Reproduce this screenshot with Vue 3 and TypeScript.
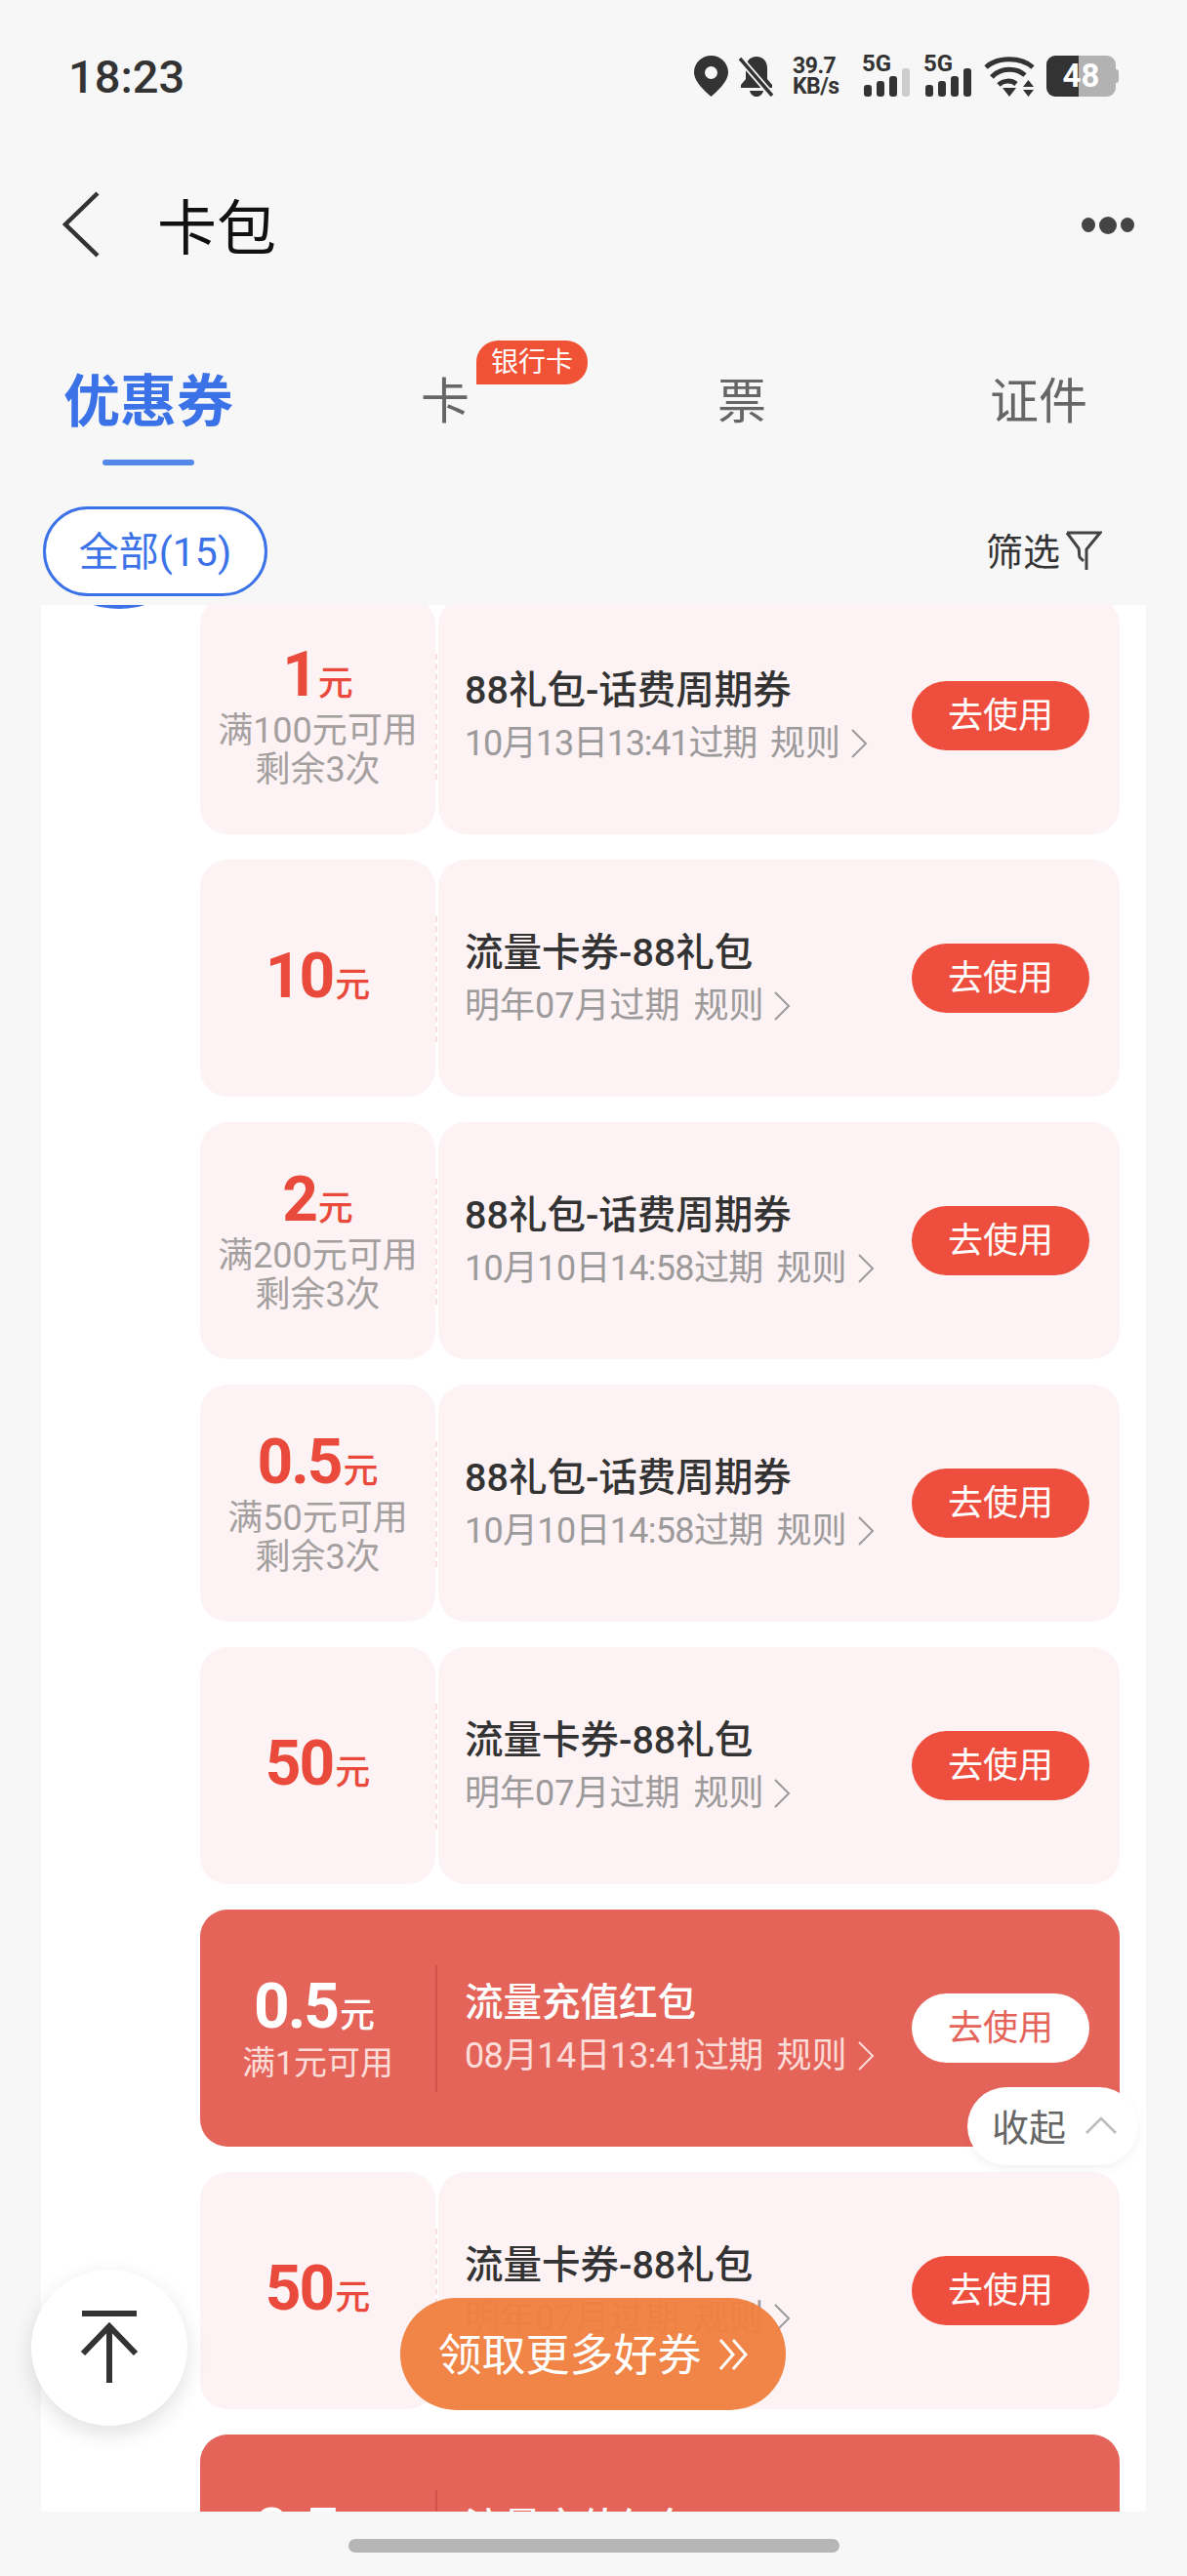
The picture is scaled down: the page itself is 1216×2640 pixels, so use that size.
<template>
  <div class="page">
    <div class="status">
      <span class="time">18:23</span>
      <div class="status-icons">
        <svg class="pin" width="35" height="42" viewBox="0 0 35 42">
          <path fill-rule="evenodd" d="M17.5 0C7.8 0 0 7.6 0 17c0 10 12 20 17.5 25C23 37 35 27 35 17 35 7.6 27.2 0 17.5 0zm0 11a6.5 6.5 0 1 1 0 13 6.5 6.5 0 0 1 0-13z" fill="#333" />
        </svg>
        <svg class="bell" width="36" height="42" viewBox="0 0 36 42">
          <path d="M18 1C11 1 7 6 7 13v11l-5 6v3h32v-3l-5-6V13C29 6 25 1 18 1z" fill="#333" />
          <path d="M11 36h14c-1 4-4 6-7 6s-6-2-7-6z" fill="#333" />
          <path d="M1 3l33 38" stroke="#f7f7f7" stroke-width="7" />
          <path d="M1 3l33 38" stroke="#333" stroke-width="3.5" />
        </svg>
        <div class="speed">
          <span>39.7</span>
          <span>KB/s</span>
        </div>
        <div class="sim">
          <span class="sim-label">5G</span>
          <div class="bars">
            <i v-for="(h, n) in barHeights" :key="n" :class="{ off: n === 3 }" :style="{ height: h + 'px' }"></i>
          </div>
        </div>
        <div class="sim sim-two">
          <span class="sim-label">5G</span>
          <div class="bars">
            <i v-for="(h, n) in barHeights" :key="n" :style="{ height: h + 'px' }"></i>
          </div>
        </div>
        <svg class="wifi" width="52" height="42" viewBox="0 0 52 42">
          <g fill="none" stroke="#333" stroke-width="5">
            <path d="M2 12C14 1 38 1 50 12" />
            <path d="M8 22C17 12 33 12 42 20" />
            <path d="M15 30C20 25 28 25 33 29" />
          </g>
          <path d="M19 33h14l-7 9zM40 32l5.500-7 5.500 7zM40 35h11l-5.500 7z" fill="#333" />
        </svg>
        <div class="battery">48</div>
      </div>
    </div>

    <div class="nav">
      <svg class="back" width="40" height="68" viewBox="0 0 40 68">
        <path d="M37 2L4 34l33 32" fill="none" stroke="#333" stroke-width="4.500" />
      </svg>
      <span class="nav-title">卡包</span>
      <div class="more"><i></i><i class="big"></i><i></i></div>
    </div>

    <div class="tabs">
      <div v-for="(t, n) in tabs" :key="t" class="tab" :class="{ active: n === 0 }">
        <span class="tab-label">{{ t }}</span>
        <span v-if="n === 0" class="tab-line"></span>
        <span v-if="n === 1" class="tab-badge">银行卡</span>
      </div>
    </div>

    <div class="filter-row">
      <div class="pill">全部(15)</div>
      <div class="filter">
        <span class="filter-text">筛选</span>
        <svg width="38" height="44" viewBox="0 0 38 44">
          <path d="M2 3h34L22 20v21M2 3l12 16c1 3 0 6 1 9l4 4" fill="none" stroke="#444" stroke-width="3" />
        </svg>
      </div>
    </div>

    <div class="panel">
      <span class="dot"></span>
      <div class="list">
        <div v-for="(c, n) in coupons" :key="n" class="coupon" :class="{ red: c.red }">
          <div class="left">
            <div class="amount">{{ c.amount }}<small>元</small></div>
            <div v-for="line in c.notes" :key="line" class="note">{{ line }}</div>
          </div>
          <div class="right">
            <div class="info">
              <div class="name">{{ c.name }}</div>
              <div class="expire">
                <span :class="{ tight: c.expire.length > 8, squeeze: c.squeeze }">{{ c.expire }}</span>
                <span>规则</span>
                <svg width="18" height="32" viewBox="0 0 18 32">
                  <path d="M2 2l14 14L2 30" fill="none" stroke="currentColor" stroke-width="2" />
                </svg>
              </div>
            </div>
            <div class="use">去使用</div>
          </div>
        </div>
      </div>
    </div>

    <div class="home"><span class="home-bar"></span></div>

    <div class="collapse">
      <span>收起</span>
      <svg width="32" height="18" viewBox="0 0 32 18">
        <path d="M1 17L16 2l15 15" fill="none" stroke="#bbb" stroke-width="2.500" />
      </svg>
    </div>
    <div class="to-top">
      <svg width="60" height="76" viewBox="0 0 60 76">
        <path d="M2 3h56" stroke="#333" stroke-width="6" />
        <path d="M30 16v58M3 44l27-28 27 28" fill="none" stroke="#333" stroke-width="6" />
      </svg>
    </div>
    <div class="more-btn">
      <span class="more-text">领取更多好券</span>
      <svg width="32" height="36" viewBox="0 0 32 36">
        <path d="M3 3l13 15L3 33M16 3l13 15-13 15" fill="none" stroke="#fff" stroke-width="3" />
      </svg>
    </div>
  </div>
</template>

<script setup lang="ts">
interface Coupon {
  amount: string
  notes: string[]
  name: string
  expire: string
  red?: boolean
  squeeze?: boolean
}

const barHeights = [12, 16, 21, 29]
const tabs = ['优惠券', '卡', '票', '证件']

const gift = '88礼包-话费周期券'
const flow = '流量卡券-88礼包'
const packet = '流量充值红包'

const coupons: Coupon[] = [
  { amount: '1', notes: ['满100元可用', '剩余3次'], name: gift, expire: '10月13日13:41过期', squeeze: true },
  { amount: '10', notes: [], name: flow, expire: '明年07月过期' },
  { amount: '2', notes: ['满200元可用', '剩余3次'], name: gift, expire: '10月10日14:58过期' },
  { amount: '0.5', notes: ['满50元可用', '剩余3次'], name: gift, expire: '10月10日14:58过期' },
  { amount: '50', notes: [], name: flow, expire: '明年07月过期' },
  { amount: '0.5', notes: ['满1元可用'], name: packet, expire: '08月14日13:41过期', red: true },
  { amount: '50', notes: [], name: flow, expire: '明年07月过期' },
  { amount: '0.5', notes: ['满1元可用'], name: packet, expire: '08月14日13:41过期', red: true }
]
</script>

<style scoped>
.page {
  position: relative;
  width: 1216px;
  height: 2640px;
  overflow: hidden;
  display: flex;
  flex-direction: column;
  background: #f7f7f7;
  font-family: Roboto, "Noto Sans CJK SC", sans-serif;
  color: #333;
}

/* status bar */
.status {
  height: 110px;
  flex-shrink: 0;
  display: flex;
  justify-content: space-between;
  padding: 56px 70px 0;
  box-sizing: border-box;
}
.time {
  font-size: 47px;
  line-height: 46px;
  font-weight: 500;
  color: #333;
}
.status-icons {
  display: flex;
  align-items: flex-start;
  height: 42px;
  margin-top: 1px;
}
.bell {
  margin-left: 11px;
}
.speed {
  margin-left: 19px;
  width: 50px;
  display: flex;
  flex-direction: column;
  font-size: 23px;
  line-height: 21px;
  font-weight: 700;
  letter-spacing: -0.500px;
  white-space: nowrap;
}
.sim {
  margin-left: 21px;
  width: 50px;
  height: 42px;
  position: relative;
}
.sim-two {
  margin-left: 13px;
}
.sim-label {
  position: absolute;
  left: 0;
  top: -4px;
  font-size: 24px;
  line-height: 24px;
  font-weight: 700;
}
.bars {
  position: absolute;
  left: 2px;
  bottom: 0;
  display: flex;
  align-items: flex-end;
  gap: 5px;
}
.bars i {
  width: 8px;
  border-radius: 3px;
  background: #333;
}
.bars i.off {
  background: #ccc;
}
.wifi {
  margin-left: 12px;
}
.battery {
  position: relative;
  margin-left: 12px;
  width: 71px;
  height: 42px;
  margin-right: 3px;
  border-radius: 9px;
  background: linear-gradient(90deg, #333 33px, #b2b2b2 33px);
  color: #fff;
  font-size: 33px;
  font-weight: 700;
  line-height: 42px;
  text-align: center;
}
.battery::after {
  content: "";
  position: absolute;
  right: -3px;
  top: 14px;
  width: 3px;
  height: 14px;
  border-radius: 0 3px 3px 0;
  background: #b2b2b2;
}

/* nav */
.nav {
  height: 206px;
  flex-shrink: 0;
  box-sizing: border-box;
  display: flex;
  align-items: center;
  padding: 34px 51px 0 63px;
  border-bottom: 1px solid #f3f3f3;
}
.nav-title {
  margin: 10px 0 0 58px;
  font-size: 61px;
  line-height: 70px;
  color: #111;
}
.more {
  margin: 2px 3px 0 auto;
  display: flex;
  align-items: center;
  gap: 3px;
}
.more i {
  width: 14px;
  height: 15px;
  border-radius: 50%;
  background: #444;
}
.more i.big {
  width: 18px;
  height: 18px;
  margin: 0 1px;
}

/* tabs */
.tabs {
  height: 203px;
  flex-shrink: 0;
  display: grid;
  grid-template-columns: repeat(4, 304px);
}
.tab {
  position: relative;
  display: flex;
  flex-direction: column;
  align-items: center;
  padding-top: 66px;
}
.tab-label {
  font-size: 50px;
  line-height: 60px;
  color: #666;
}
.tab.active .tab-label {
  font-size: 58px;
  font-weight: 700;
  color: #3b72e8;
}
.tab-line {
  margin-top: 29px;
  width: 94px;
  height: 6px;
  border-radius: 3px;
  background: #5488e8;
}
.tab-badge {
  position: absolute;
  left: 184px;
  top: 33px;
  width: 114px;
  height: 45px;
  border-radius: 22px 22px 22px 0;
  background: #ef5235;
  color: #fff;
  font-size: 28px;
  line-height: 45px;
  text-align: center;
}

/* filter row */
.filter-row {
  height: 101px;
  flex-shrink: 0;
  display: flex;
  justify-content: space-between;
  align-items: flex-start;
  padding: 0 87px 0 44px;
}
.pill {
  width: 230px;
  height: 92px;
  box-sizing: border-box;
  border: 3px solid #3b72e8;
  border-radius: 46px;
  background: #fff;
  color: #3b72e8;
  font-size: 41px;
  line-height: 88px;
  text-align: center;
  position: relative;
  z-index: 1;
}
.filter {
  display: flex;
  align-items: center;
  gap: 5px;
  height: 92px;
  font-size: 38px;
  color: #333;
}
.filter-text {
  margin-bottom: 6px;
}

/* coupon list */
.panel {
  position: relative;
  height: 1954px;
  flex-shrink: 0;
  margin: 0 42px;
  box-sizing: border-box;
  padding: 0 27px 0 163px;
  background: #fff;
  overflow: hidden;
}
.dot {
  position: absolute;
  left: -10px;
  top: -176px;
  width: 180px;
  height: 180px;
  border-radius: 50%;
  background: #3b72e8;
}
.list {
  margin-top: -8px;
  display: flex;
  flex-direction: column;
  gap: 26px;
}
.coupon {
  height: 243px;
  flex-shrink: 0;
  display: flex;
  justify-content: space-between;
  position: relative;
}
.left {
  width: 241px;
  display: flex;
  flex-direction: column;
  align-items: center;
  justify-content: center;
  background: #fdf2f4;
  border-radius: 28px;
}
.right {
  width: 698px;
  box-sizing: border-box;
  padding: 0 31px 0 27px;
  display: flex;
  align-items: center;
  justify-content: space-between;
  background: #fdf2f4;
  border-radius: 28px;
}
.coupon::after {
  content: "";
  position: absolute;
  left: 241px;
  top: 58px;
  bottom: 56px;
  width: 0;
  border-left: 2px dashed #f6dfe3;
}
.amount {
  padding-top: 5px;
  font-size: 64px;
  line-height: 56px;
  font-weight: 700;
  color: #e94a3b;
  letter-spacing: -2px;
  white-space: nowrap;
}
.amount small {
  font-size: 36px;
  font-weight: 500;
  letter-spacing: 0;
  margin-left: 2px;
}
.note {
  font-size: 36px;
  line-height: 40px;
  color: #a5a0a0;
  white-space: nowrap;
}
.info {
  display: flex;
  flex-direction: column;
  gap: 8px;
}
.name {
  font-size: 39.500px;
  line-height: 48px;
  font-weight: 500;
  color: #333;
  white-space: nowrap;
}
.expire {
  display: flex;
  align-items: center;
  gap: 14px;
  font-size: 36px;
  line-height: 44px;
  color: #9c9a9a;
  white-space: nowrap;
}
.expire svg {
  margin-left: -4px;
}
.tight {
  letter-spacing: -0.700px;
}
.squeeze {
  letter-spacing: -1.200px;
}
.use {
  width: 182px;
  height: 71px;
  flex-shrink: 0;
  border-radius: 36px;
  background: #ee4e3d;
  color: #fff;
  font-size: 36px;
  line-height: 73px;
  text-align: center;
}

/* filled variant */
.coupon.red {
  background: #e4645a;
  border-radius: 28px;
}
.coupon.red .left,
.coupon.red .right {
  background: none;
}
.coupon.red::after {
  top: 57px;
  bottom: 56px;
  border-left: 2px solid #cf5349;
}
.coupon.red .amount {
  color: #fff;
  margin-right: 7px;
}
.coupon.red .note {
  font-size: 34px;
  color: #fcdcd8;
}
.coupon.red .name {
  color: #fff;
}
.coupon.red .expire {
  color: #fcdcd8;
}
.coupon.red .use {
  background: #fff;
  color: #e4645a;
}

/* home indicator */
.home {
  flex: 1;
  display: flex;
  justify-content: center;
  padding-top: 28px;
}
.home-bar {
  width: 503px;
  height: 14px;
  border-radius: 7px;
  background: #b6b6b6;
}

/* floating */
.collapse {
  position: absolute;
  left: 991px;
  top: 2139px;
  width: 175px;
  height: 80px;
  box-sizing: border-box;
  padding: 0 0 3px 25px;
  display: flex;
  align-items: center;
  gap: 20px;
  border-radius: 40px;
  background: #fff;
  box-shadow: 0 4px 10px rgba(0, 0, 0, 0.05);
  font-size: 38px;
  color: #666;
}
.to-top {
  position: absolute;
  left: 32px;
  top: 2326px;
  width: 160px;
  height: 160px;
  border-radius: 50%;
  background: #fff;
  box-shadow: 0 8px 22px rgba(0, 0, 0, 0.12);
  display: flex;
  align-items: center;
  justify-content: center;
}
.more-btn {
  position: absolute;
  left: 410px;
  top: 2355px;
  width: 395px;
  height: 115px;
  border-radius: 58px;
  background: rgba(239, 128, 64, 0.96);
  color: #fff;
  font-size: 45px;
  display: flex;
  align-items: center;
  justify-content: center;
  gap: 16px;
}
.more-text {
  margin-bottom: 4px;
}
</style>
